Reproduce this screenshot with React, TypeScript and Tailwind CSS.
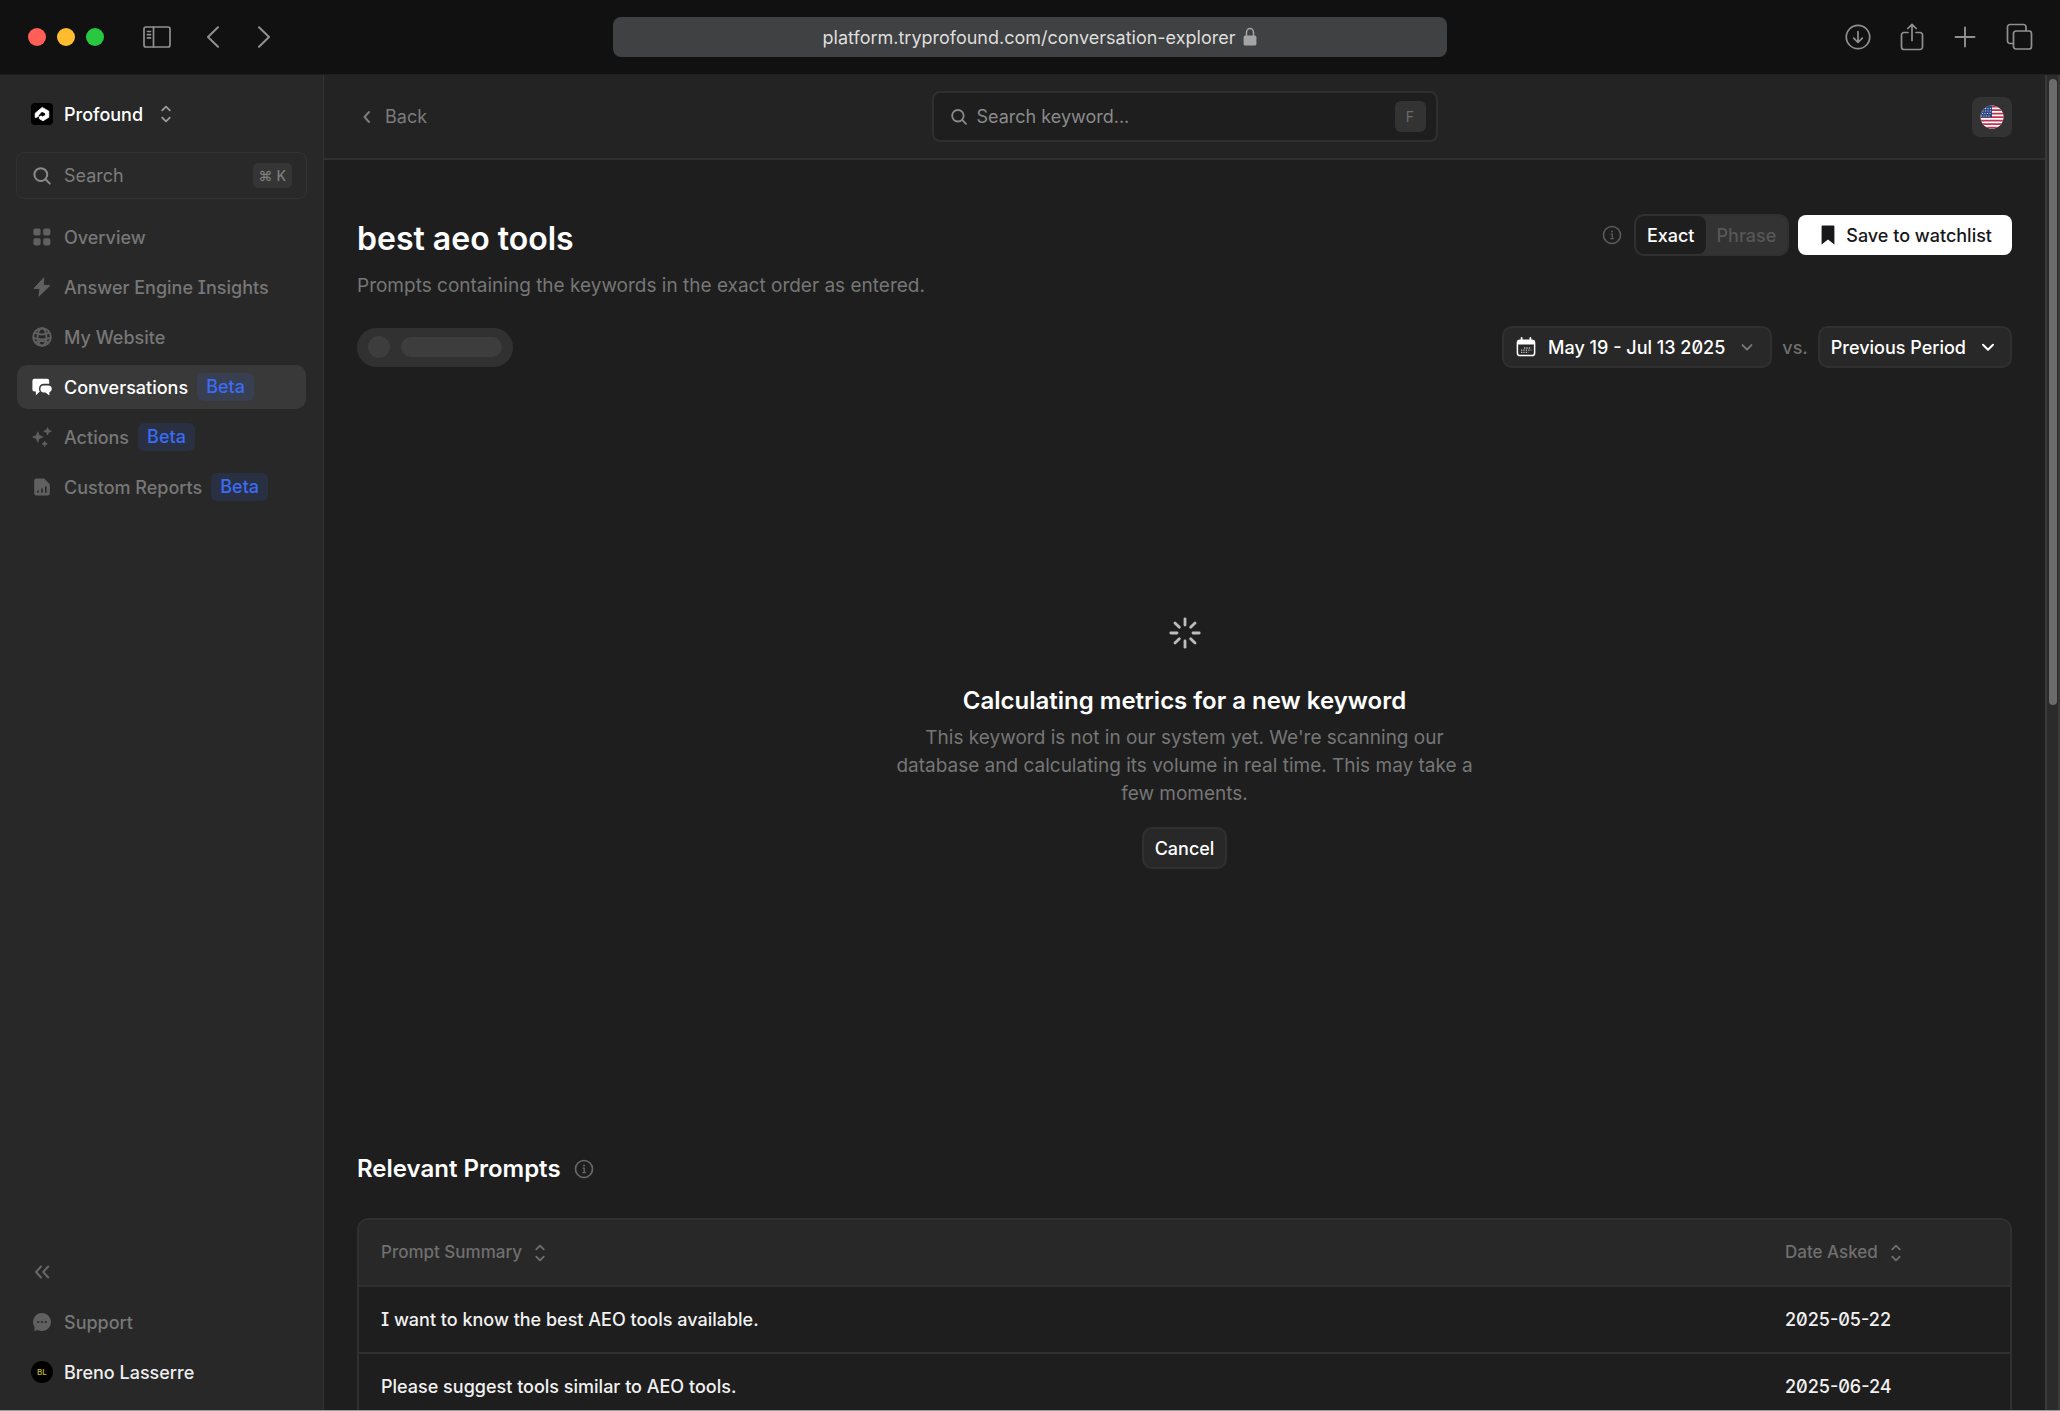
import type { ReactNode } from "react";

type IconProps = { className?: string };

function SortIcon({ className = "h-5 w-5" }: IconProps) {
  return (
    <svg viewBox="0 0 20 20" fill="none" stroke="currentColor" strokeWidth="1.8" strokeLinecap="round" strokeLinejoin="round" className={className}>
      <path d="M6.2 6.4 10 2.6l3.800 3.800M6.200 13.600l3.800 3.800 3.800-3.800" />
    </svg>
  );
}

function SearchIcon({ className = "h-5 w-5" }: IconProps) {
  return (
    <svg viewBox="0 0 20 20" fill="none" stroke="currentColor" strokeWidth="2" strokeLinecap="round" className={className}>
      <circle cx="8.8" cy="8.6" r="6.4" />
      <path d="m13.5 13.3 4.3 4.3" />
    </svg>
  );
}

function InfoIcon({ className = "h-5 w-5" }: IconProps) {
  return (
    <svg viewBox="0 0 20 20" fill="none" stroke="currentColor" strokeWidth="1.6" className={className}>
      <circle cx="10" cy="10" r="8.5" />
      <path d="M8.6 9.2h1.6v4.3M8.4 13.6h3.4" strokeWidth="1.3" />
      <circle cx="10" cy="6.6" r="1" fill="currentColor" stroke="none" />
    </svg>
  );
}

function ChevronDown({ className = "h-5 w-5" }: IconProps) {
  return (
    <svg viewBox="0 0 20 20" fill="none" stroke="currentColor" strokeWidth="2" strokeLinecap="round" strokeLinejoin="round" className={className}>
      <path d="m5 7.8 5 5 5-5" />
    </svg>
  );
}

function GridIcon() {
  return (
    <svg viewBox="0 0 20 20" fill="currentColor" className="h-5 w-5">
      <rect x="1.4" y="1.4" width="7.2" height="7.2" rx="1.8" />
      <rect x="11.2" y="1.4" width="7.2" height="7.2" rx="1.8" />
      <rect x="1.4" y="11.2" width="7.2" height="7.2" rx="1.8" />
      <rect x="11.2" y="11.2" width="7.2" height="7.2" rx="1.8" />
    </svg>
  );
}

function BoltIcon() {
  return (
    <svg viewBox="0 0 20 20" fill="currentColor" stroke="currentColor" strokeWidth="1" strokeLinejoin="round" className="h-5 w-5">
      <path d="M11.8.8 2 11.4h6.1L6.9 19.2 18 8.4h-6.600z" />
    </svg>
  );
}

function GlobeIcon() {
  return (
    <svg viewBox="0 0 20 20" fill="none" stroke="currentColor" strokeWidth="1.9" className="h-5 w-5">
      <circle cx="10" cy="10" r="8.8" />
      <ellipse cx="10" cy="10" rx="4.4" ry="8.8" />
      <path d="M2.6 5.6c4.4 2.2 10.400 2.200 14.800 0M1.200 10.600c5.200 2.200 12.400 2.200 17.600 0M3.400 15.400c4-1.500 9.200-1.500 13.200 0" />
    </svg>
  );
}

function ChatsIcon() {
  return (
    <svg viewBox="0 0 20 20" fill="currentColor" className="h-5 w-5">
      <path d="M2.400 1.800h12.800a2 2 0 0 1 2 2v2.900h-5.400a4.800 4.800 0 0 0-4.800 4.800v.4c0 1 .3 1.900.8 2.600L3.900 18.200v-3.600H2.400a2 2 0 0 1-2-2V3.800a2 2 0 0 1 2-2z" />
      <path d="M11.800 8.600h4.400a3.600 3.600 0 0 1 3.600 3.400 3.400 3.400 0 0 1-2.400 3.200v3.400l-4-3.200h-1.600a3.400 3.400 0 0 1 0-6.800z" />
    </svg>
  );
}

function SparklesIcon() {
  return (
    <svg viewBox="0 0 20 20" fill="currentColor" stroke="currentColor" strokeWidth=".8" strokeLinejoin="round" className="h-5 w-5">
      <path d="M5.800 4.800 7.200 8.600 11 10 7.200 11.400 5.800 15.200 4.400 11.400.6 10l3.800-1.400z" />
      <path d="m15.600.6 1.100 2.500 2.700 1.100-2.700 1.100-1.100 2.600-1.100-2.600-2.700-1.100 2.700-1.100z" />
      <path d="m12.700 14.200.9 1.700 1.700.9-1.700.9-.9 1.700-.9-1.700-1.700-.9 1.700-.9z" />
    </svg>
  );
}

function ReportIcon() {
  return (
    <svg viewBox="0 0 20 20" className="h-5 w-5">
      <path fill="currentColor" d="M4.400 1.600h7.800l5.600 5.600v9a2.200 2.200 0 0 1-2.200 2.200H4.400a2.200 2.200 0 0 1-2.200-2.200V3.800a2.200 2.200 0 0 1 2.200-2.200z" />
      <path d="M6 13.400v2.400M10 11.600v4.200M13.800 9.400v6.400" stroke="#282828" strokeWidth="1.600" />
    </svg>
  );
}

function SupportIcon() {
  return (
    <svg viewBox="0 0 20 20" className="h-5 w-5">
      <path fill="currentColor" d="M10 1a9 9 0 1 1-4.200 17L2.200 19l.5-3.800A9 9 0 0 1 10 1z" />
      <g fill="#282828">
        <circle cx="6.200" cy="10" r="1.100" />
        <circle cx="10" cy="10" r="1.100" />
        <circle cx="13.800" cy="10" r="1.100" />
      </g>
    </svg>
  );
}

function LogoIcon() {
  return (
    <svg viewBox="0 0 22 22" className="h-[22px] w-[22px] shrink-0">
      <rect width="22" height="22" rx="4" fill="#000" />
      <path
        fill="#fff"
        stroke="#fff"
        strokeWidth=".8"
        strokeLinejoin="round"
        d="M11.200 4.400 17.800 8.200v6L12 17.800l-3.600-2v-3l-3.800 2-.4-.4v-4.200z"
      />
      <path fill="#000" d="m11.500 9 2.600 1.400v1.500l-2.600 1.600-1.500-.9-2.200 1.100v-1.600l1.600-1v-1z" />
    </svg>
  );
}

function CalendarIcon() {
  return (
    <svg viewBox="0 0 20 20" className="h-5 w-5">
      <path d="M5.600 1v3M14.400 1v3" stroke="#fff" strokeWidth="1.800" strokeLinecap="round" />
      <rect x="1.400" y="3.200" width="17.200" height="15.400" rx="2.600" fill="none" stroke="#fff" strokeWidth="1.500" />
      <path d="M1.400 7.600V5.400a2 2 0 0 1 2-2h13.200a2 2 0 0 1 2 2v2.200z" fill="#fff" />
      <path d="M8 11h7.400M5 13.200h10.400M5 15.400h7.400" stroke="#bdbdbd" strokeWidth="1.300" strokeDasharray="1.300 1.100" />
    </svg>
  );
}

function FlagIcon() {
  return (
    <svg viewBox="0 0 24 24" className="h-6 w-6">
      <clipPath id="flag-circle">
        <circle cx="12" cy="12" r="11.500" />
      </clipPath>
      <g clipPath="url(#flag-circle)">
        <rect width="24" height="24" fill="#fff" />
        <path d="M0 1.500h24M0 5h24M0 8.500h24M0 12h24M0 15.500h24M0 19h24M0 22.500h24" stroke="#c0314d" strokeWidth="1.750" />
        <rect width="12" height="12.600" fill="#2e4a86" />
        <path d="M5 3.500h7M2.500 6h9M2 8.500h10M1 11h10" stroke="#c9d2e6" strokeWidth="1" strokeDasharray="1 1.500" />
      </g>
    </svg>
  );
}

function Spinner() {
  const angles = [0, 45, 90, 135, 180, 225, 270, 315];
  return (
    <svg viewBox="0 0 32 32" stroke="#bdbdbd" strokeWidth="2.800" strokeLinecap="round" className="h-8 w-8">
      {angles.map((a) => (
        <path key={a} d="M16 1.800v6.200" transform={`rotate(${a} 16 16)`} />
      ))}
    </svg>
  );
}

function BrowserBar() {
  const stroke = {
    fill: "none",
    stroke: "currentColor",
    strokeWidth: 1.7,
    strokeLinecap: "round",
    strokeLinejoin: "round",
  } as const;

  return (
    <div className="grid h-[75px] shrink-0 grid-cols-[1fr_minmax(0,834px)_1fr] items-center border-b border-[#1f1f1f] bg-[#111111] text-[#909090]">
      <div className="flex items-center pl-7">
        {/* window buttons */}
        <div className="flex gap-[11px]">
          <span className="h-[18px] w-[18px] rounded-full bg-[#ff5f57]" />
          <span className="h-[18px] w-[18px] rounded-full bg-[#febc2e]" />
          <span className="h-[18px] w-[18px] rounded-full bg-[#28c840]" />
        </div>
        <button aria-label="Sidebar" className="ml-[39px]">
          <svg viewBox="0 0 28 22" className="h-[22px] w-7" {...stroke}>
            <rect x="1" y="1" width="26" height="20" rx="2" />
            <path d="M10.500 1v20M4.500 5.500h3M4.500 8.700h3M4.500 11.900h3" />
          </svg>
        </button>
        <button aria-label="Previous page" className="ml-[31px]">
          <svg viewBox="0 0 22 22" className="h-[22px] w-[22px]" {...stroke} strokeWidth="2">
            <path d="M16 1.200 6 11l10 9.800" />
          </svg>
        </button>
        <button aria-label="Next page" className="ml-[30px]">
          <svg viewBox="0 0 22 22" className="h-[22px] w-[22px]" {...stroke} strokeWidth="2">
            <path d="M5 1.200 15 11 5 20.800" />
          </svg>
        </button>
      </div>

      <div className="flex h-10 items-center justify-center gap-2 rounded-lg bg-[#404142] pl-5 text-[18px] text-[#dedede]">
        <span>platform.tryprofound.com/conversation-explorer</span>
        <svg viewBox="0 0 14 20" className="h-5 w-[14px]">
          <path d="M3.500 9V5.500a3.500 4 0 0 1 7 0V9" fill="none" stroke="#a5a5a5" strokeWidth="1.500" />
          <rect x=".6" y="8.600" width="12.800" height="10" rx="1.600" fill="#a5a5a5" />
        </svg>
      </div>

      <div className="flex items-center justify-end gap-7 pr-[27px]">
        <button aria-label="Downloads">
          <svg viewBox="0 0 26 26" className="h-[26px] w-[26px]" {...stroke}>
            <circle cx="13" cy="13" r="11.700" />
            <path d="M13 7.500v10.500M8.700 14.200l4.300 4.100 4.300-4.100" />
          </svg>
        </button>
        <button aria-label="Share">
          <svg viewBox="0 0 26 28" className="h-7 w-[26px]" {...stroke}>
            <path d="M9 9.500H5a2.500 2.500 0 0 0-2.500 2.500v12A2.500 2.500 0 0 0 5 26.500h16a2.500 2.500 0 0 0 2.500-2.500V12A2.500 2.500 0 0 0 21 9.500h-4M13 17.500v-16M8.800 5.500 13 1.300l4.200 4.200" />
          </svg>
        </button>
        <button aria-label="New tab">
          <svg viewBox="0 0 24 24" className="h-6 w-6" {...stroke} strokeWidth="1.900">
            <path d="M12 2.500v19M2.500 12h19" />
          </svg>
        </button>
        <button aria-label="Tab overview">
          <svg viewBox="0 0 28 28" className="h-7 w-7" {...stroke}>
            <path d="M8 20.500H5A2.500 2.500 0 0 1 2.500 18V4A2.500 2.500 0 0 1 5 1.500h13.500A2.500 2.500 0 0 1 21 4v3.500" />
            <rect x="8.500" y="8" width="18" height="18" rx="2.500" />
          </svg>
        </button>
      </div>
    </div>
  );
}

function NavItem({ icon, label, beta, active }: { icon: ReactNode; label: string; beta?: boolean; active?: boolean }) {
  return (
    <a
      href="#"
      className={
        active
          ? "flex h-11 items-center rounded-[10px] bg-[#393939] px-[15px] text-white"
          : "flex h-11 items-center rounded-[10px] px-[15px] text-[#777777]"
      }
    >
      <span className={active ? "text-white" : "text-[#606060]"}>{icon}</span>
      <span className="ml-3">{label}</span>
      {beta && (
        <span className="ml-[9px] rounded-md bg-[#3468f6]/12 px-[9px] leading-7 text-[#3a6cf7]">Beta</span>
      )}
    </a>
  );
}

function Sidebar() {
  return (
    <aside className="flex w-[324px] shrink-0 flex-col border-r border-[#333333] bg-[#282828] px-4 pb-4 text-[18px] font-medium">
      <button className="mt-[17px] flex h-11 items-center px-[15px] text-white">
        <LogoIcon />
        <span className="ml-[11px]">Profound</span>
        <SortIcon className="ml-[13px] h-5 w-5 text-[#9b9b9b]" />
      </button>

      <label className="mt-4 flex h-[47px] items-center rounded-lg border border-[#333333] bg-[#292929] pr-[14px] pl-[15px] text-[#8a8a8a]">
        <SearchIcon className="h-5 w-5 shrink-0" />
        <input
          type="text"
          placeholder="Search"
          aria-label="Search"
          className="ml-3 w-full min-w-0 bg-transparent font-normal outline-none placeholder:text-[#7d7d7d]"
        />
        <kbd className="flex h-[25px] shrink-0 items-center gap-1 rounded-[5px] bg-[#353535] px-[6px] font-[Inter] text-[14px] text-[#7d7d7d]">
          <span>⌘</span>
          <span>K</span>
        </kbd>
      </label>

      <nav className="mt-4 flex flex-col gap-[6px] px-px">
        <NavItem icon={<GridIcon />} label="Overview" />
        <NavItem icon={<BoltIcon />} label="Answer Engine Insights" />
        <NavItem icon={<GlobeIcon />} label="My Website" />
        <NavItem icon={<ChatsIcon />} label="Conversations" beta active />
        <NavItem icon={<SparklesIcon />} label="Actions" beta />
        <NavItem icon={<ReportIcon />} label="Custom Reports" beta />
      </nav>

      <div className="mt-auto flex flex-col gap-[6px] px-px">
        <button aria-label="Collapse sidebar" className="flex h-11 items-center px-[15px] text-[#666666]">
          <svg viewBox="0 0 20 20" fill="none" stroke="currentColor" strokeWidth="2" strokeLinecap="round" strokeLinejoin="round" className="h-5 w-5">
            <path d="M9 4.500 4 10l5 5.500M16.200 4.500l-5 5.500 5 5.500" />
          </svg>
        </button>
        <NavItem icon={<SupportIcon />} label="Support" />
        <button className="flex h-11 items-center px-[14px] text-[#eeeeee]">
          <span className="flex h-[22px] w-[22px] items-center justify-center rounded-full bg-black text-[8px] text-[#c9bb2c]">BL</span>
          <span className="ml-[11px]">Breno Lasserre</span>
        </button>
      </div>
    </aside>
  );
}

function TopBar() {
  return (
    <header className="grid h-[85px] shrink-0 grid-cols-[1fr_minmax(0,506px)_1fr] items-center border-b-2 border-[#303030] bg-[#232323] px-[33px]">
      <a href="#" className="flex items-center gap-3 text-[18px] text-[#7b7b7b]">
        <svg viewBox="0 0 16 16" fill="none" stroke="currentColor" strokeWidth="2" strokeLinecap="round" strokeLinejoin="round" className="h-4 w-4">
          <path d="M12 3 7.500 8l4.500 5" />
        </svg>
        Back
      </a>
      <label className="flex h-[51px] items-center rounded-lg border-2 border-[#2f2f2f] bg-[#1e1e1e] pr-2.5 pl-4 text-[#8a8a8a]">
        <SearchIcon className="h-[18px] w-[18px] shrink-0" />
        <input
          type="text"
          placeholder="Search keyword..."
          aria-label="Search keyword"
          className="ml-[9px] w-full bg-transparent text-[18px] outline-none placeholder:text-[#8a8a8a]"
        />
        <kbd className="flex h-[31px] w-[31px] shrink-0 items-center justify-center rounded-md bg-[#333333] font-[Inter] text-[14px] text-[#6b6b6b]">F</kbd>
      </label>
      <button aria-label="Region" className="flex h-10 w-10 items-center justify-center justify-self-end rounded-lg bg-[#333333]">
        <FlagIcon />
      </button>
    </header>
  );
}

const prompts = [
  { summary: "I want to know the best AEO tools available.", date: "2025-05-22" },
  { summary: "Please suggest tools similar to AEO tools.", date: "2025-06-24" },
];

function PromptsTable() {
  return (
    <div className="mt-[33px] overflow-hidden rounded-t-xl border-2 border-b-0 border-[#303030]">
      <table className="w-full table-fixed text-left text-[18px]">
        <colgroup>
          <col />
          <col className="w-[247px]" />
        </colgroup>
        <thead className="bg-[#282828] text-[17px] text-[#6f6f6f]">
          <tr className="h-[66px] border-b-2 border-[#303030]">
            <th className="pl-[22px] font-medium">
              <button className="flex items-center gap-2">
                Prompt Summary
                <SortIcon />
              </button>
            </th>
            <th className="pl-[22px] font-medium">
              <button className="flex items-center gap-2">
                Date Asked
                <SortIcon />
              </button>
            </th>
          </tr>
        </thead>
        <tbody className="font-medium text-[#f2f2f2]">
          {prompts.map((p) => (
            <tr key={p.date} className="h-[67px] border-b-2 border-[#303030]">
              <td className="pl-[22px]">{p.summary}</td>
              <td className="pl-[22px]">{p.date}</td>
            </tr>
          ))}
        </tbody>
      </table>
    </div>
  );
}

export default function App() {
  return (
    <div className="flex h-screen flex-col overflow-hidden border-b border-[#9a9a9a] bg-[#1e1e1e] font-[Inter,sans-serif] text-white [font-feature-settings:'zero','cv08']">
      <BrowserBar />
      <div className="flex min-h-0 flex-1">
        <Sidebar />

        <div className="flex min-w-0 flex-1 flex-col overflow-hidden">
          <TopBar />

          <main className="flex min-h-0 flex-1 flex-col px-[33px]">
            <div className="mt-[54px] flex items-start justify-between">
              <div>
                <h1 className="text-[32px] leading-[50px] font-semibold">best aeo tools</h1>
                <p className="mt-2 text-[19px] leading-7 text-[#767676]">
                  Prompts containing the keywords in the exact order as entered.
                </p>
              </div>
              <div className="flex items-center text-[18px] font-medium">
                <InfoIcon className="mr-3 h-5 w-5 text-[#5a5a5a]" />
                <div className="flex h-[42px] rounded-[10px] border-2 border-[#303030] bg-[#333333]">
                  <button className="rounded-lg bg-[#1e1e1e] px-[11px]">Exact</button>
                  <button className="px-[11px] text-[#575757]">Phrase</button>
                </div>
                <button className="ml-[9px] flex h-10 items-center gap-2 rounded-lg bg-white px-5 text-[#18181b]">
                  <svg viewBox="0 0 20 20" fill="currentColor" className="h-5 w-5">
                    <path d="M3.600 1.600a1 1 0 0 1 1-1h10.800a1 1 0 0 1 1 1v17.800L10 14.400l-6.400 5z" />
                  </svg>
                  Save to watchlist
                </button>
              </div>
            </div>

            <div className="mt-[26px] flex items-center justify-between">
              {/* placeholder chip while the topic loads */}
              <div className="flex h-[39px] w-[156px] items-center gap-[11px] rounded-full bg-[#313131] px-[11px]">
                <div className="h-[22px] w-[22px] rounded-full bg-[#3d3d3d]" />
                <div className="h-5 flex-1 rounded-full bg-[#3d3d3d]" />
              </div>
              <div className="flex items-center gap-2.5 text-[18px] font-medium">
                <button className="flex h-[42px] items-center rounded-[10px] border-2 border-[#303030] bg-[#282828] pr-[14px] pl-3">
                  <CalendarIcon />
                  <span className="ml-3">May 19 - Jul 13 2025</span>
                  <ChevronDown className="ml-[13px] h-[18px] w-[18px] text-[#7a7a7a]" />
                </button>
                <span className="text-[#6f6f6f]">vs.</span>
                <button className="flex h-[42px] items-center gap-3 rounded-[10px] border-2 border-[#303030] bg-[#282828] pr-3 pl-[11px]">
                  Previous Period
                  <ChevronDown className="h-5 w-5" />
                </button>
              </div>
            </div>

            <section className="mt-[249px] flex flex-col items-center text-center">
              <Spinner />
              <h2 className="mt-9 text-[24px] leading-8 font-semibold">Calculating metrics for a new keyword</h2>
              <p className="mt-[7px] max-w-[600px] text-[19px] leading-7 text-[#767676]">
                This keyword is not in our system yet. We're scanning our database and calculating its volume in real time. This may take a few moments.
              </p>
              <button className="mt-[19px] h-[42px] rounded-[10px] border-2 border-[#303030] bg-[#282828] px-[11px] text-[18px] font-medium">
                Cancel
              </button>
            </section>

            <section className="mt-[284px]">
              <div className="flex items-center gap-[13px]">
                <h2 className="text-[24px] leading-8 font-semibold">Relevant Prompts</h2>
                <InfoIcon className="h-5 w-5 text-[#6a6a6a]" />
              </div>
              <PromptsTable />
            </section>
          </main>
        </div>

        {/* scrollbar */}
        <div className="flex w-[15px] shrink-0 flex-col items-center border-x-2 border-[#393939] bg-[#2b2b2b] pt-1">
          <div className="h-[47%] w-2 rounded-full bg-[#6b6b6b]" />
        </div>
      </div>
    </div>
  );
}
